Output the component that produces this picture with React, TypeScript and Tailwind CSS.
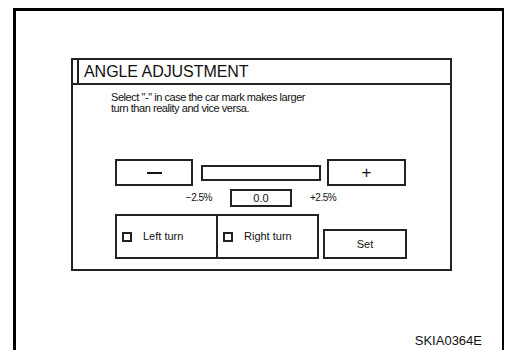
import React from "react";

export default function App() {
  return (
    <div className="w-[506px] h-[350px] overflow-hidden bg-white font-['Liberation_Sans',Arial,sans-serif] text-[#111]">
      <div className="ml-[13px] mt-[8px] w-[491px] h-[360px] border-t-[3px] border-l-[3px] border-r-[2px] border-black flex flex-col">
        <div className="ml-[55px] mt-[47px] w-[381px] h-[213px] border-2 border-[#222] flex flex-col">
          <div className="h-[25px] flex items-stretch border-b-2 border-[#222]">
            <div className="w-[6px] border-r-2 border-[#222]" />
            <div className="pl-[5px] flex items-center text-[16px] tracking-[-0.05px] leading-none">ANGLE ADJUSTMENT</div>
          </div>
          <div className="pl-[38px] pt-[7px] text-[11px] leading-[11px] tracking-[-0.45px]">
            <div>Select "-" in case the car mark makes larger</div>
            <div>turn than reality and vice versa.</div>
          </div>
          <div className="pl-[42px] mt-[45px] flex items-center">
            <div className="w-[78px] h-[27px] border-2 border-[#222] flex items-center justify-center">
              <div className="w-[15px] h-[2px] bg-[#111]" />
            </div>
            <div className="ml-[8px] w-[120px] h-[16px] border-2 border-[#222]" />
            <div className="ml-[6px] w-[79px] h-[27px] border-2 border-[#222] flex items-center justify-center text-[17px] leading-none">+</div>
          </div>
          <div className="pl-[42px] mt-[3px] flex items-center h-[18px]">
            <div className="w-[97px] text-right text-[10px] tracking-[-0.5px] leading-none">−2.5%</div>
            <div className="ml-[18px] w-[62px] h-[18px] border-2 border-[#222] flex items-center justify-center text-[11px] leading-none">0.0</div>
            <div className="ml-[18px] text-[10px] tracking-[-0.5px] leading-none">+2.5%</div>
          </div>
          <div className="pl-[42px] mt-[7px] flex items-start">
            <div className="w-[103px] h-[45px] border-2 border-[#222] flex items-center pl-[5px] text-[11px] leading-none">
              <div className="w-[10px] h-[10px] border-2 border-[#222]" />
              <span className="ml-[11px]">Left turn</span>
            </div>
            <div className="-ml-[2px] w-[103px] h-[45px] border-2 border-[#222] flex items-center pl-[5px] text-[11px] leading-none">
              <div className="w-[10px] h-[10px] border-2 border-[#222]" />
              <span className="ml-[11px]">Right turn</span>
            </div>
            <div className="ml-[4px] mt-[15px] w-[84px] h-[30px] border-2 border-[#222] flex items-center justify-center text-[11px] leading-none">Set</div>
          </div>
        </div>
        <div className="mt-auto mb-[21px] self-end mr-[20px] text-[13px] leading-none">SKIA0364E</div>
      </div>
    </div>
  );
}
